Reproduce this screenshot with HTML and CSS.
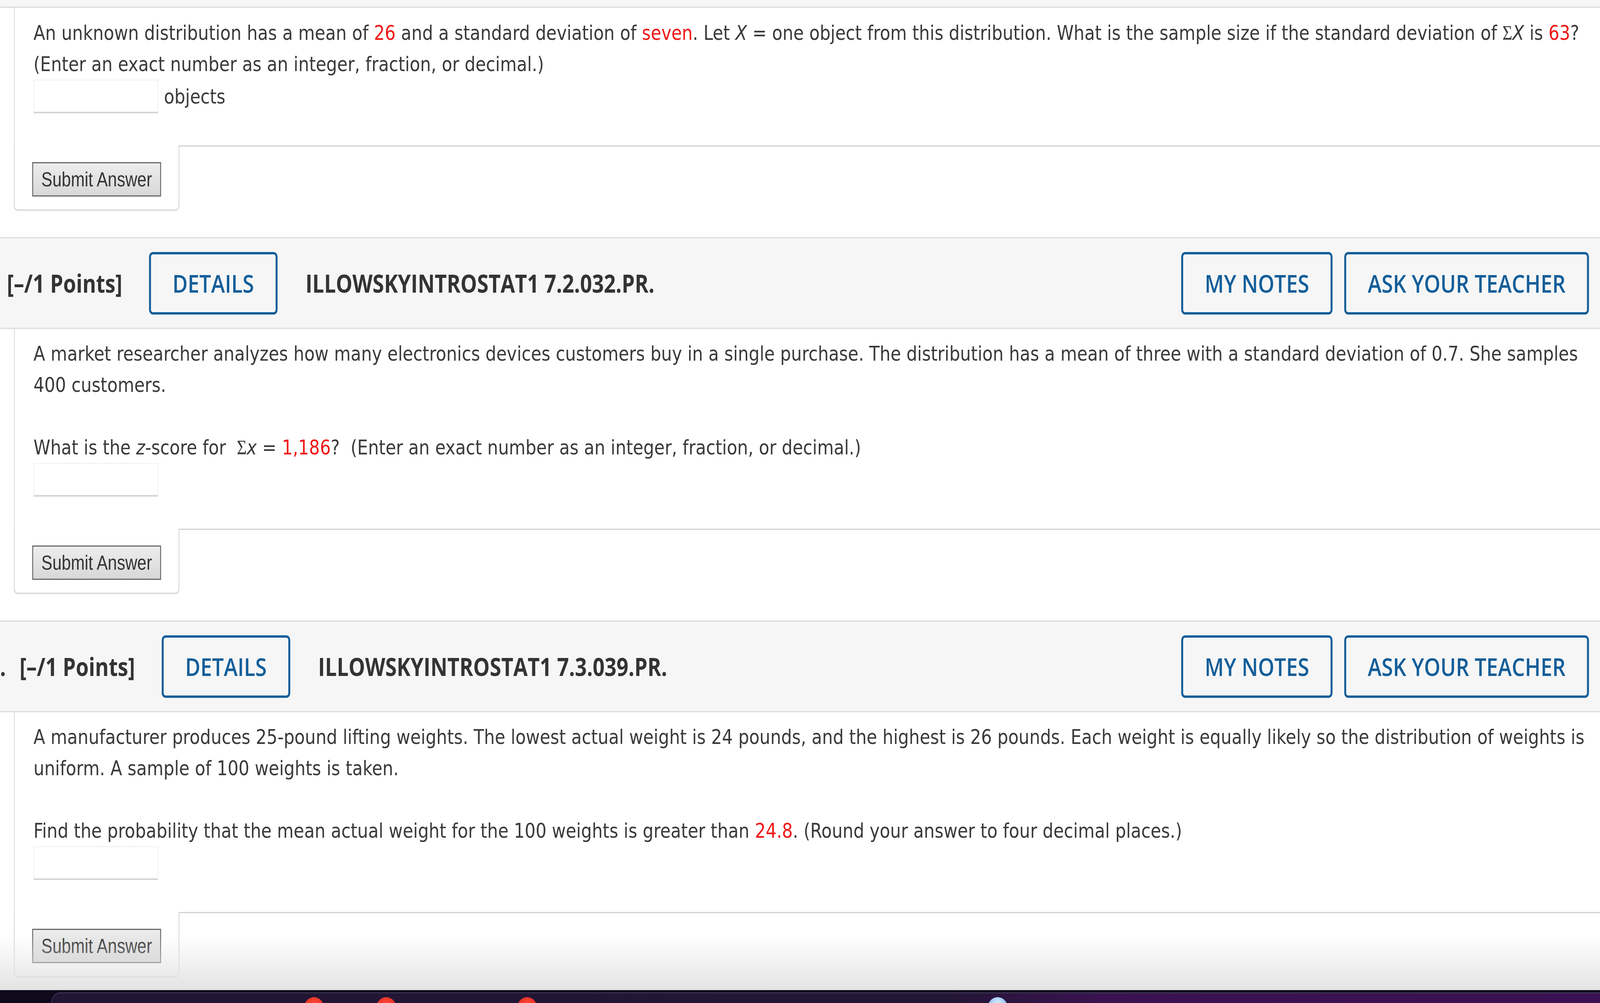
FILE: index.html
```html
<!DOCTYPE html>
<html lang="en">
<head>
<meta charset="utf-8">
<title>Assignment</title>
<link rel="stylesheet" href="styles.css">
</head>
<body>
<div class="screen">
  <main class="page">
    <div class="prev-head"></div>

    <section class="question">
      <div class="qbody first">
        <p>An unknown distribution has a mean of <span class="val">26</span> and a standard deviation of <span class="val">seven</span>. Let <i>X</i> = one object from this distribution. What is the sample size if the standard deviation of <span class="sig">Σ</span><i>X</i> is <span class="val">63</span>? (Enter an exact number as an integer, fraction, or decimal.)</p>
        <div class="answer"><input class="field" type="text" aria-label="answer"><span class="unit">objects</span></div>
      </div>
      <div class="qfoot"><div class="tab"><button class="submit">Submit Answer</button></div><div class="rest"></div></div>
    </section>

    <section class="question">
      <header class="qhead">
        <span class="points">[–/1 Points]</span>
        <button class="pill">DETAILS</button>
        <span class="qtitle">ILLOWSKYINTROSTAT1 7.2.032.PR.</span>
        <div class="actions"><button class="pill">MY NOTES</button><button class="pill">ASK YOUR TEACHER</button></div>
      </header>
      <div class="qbody">
        <p>A market researcher analyzes how many electronics devices customers buy in a single purchase. The distribution has a mean of three with a standard deviation of 0.7. She samples 400 customers.</p>
        <p>What is the <i>z</i>-score for &nbsp;<span class="sig">Σ</span><i>x</i> = <span class="val">1,186</span>? &nbsp;(Enter an exact number as an integer, fraction, or decimal.)</p>
        <div class="answer"><input class="field" type="text" aria-label="answer"></div>
      </div>
      <div class="qfoot"><div class="tab"><button class="submit">Submit Answer</button></div><div class="rest"></div></div>
    </section>

    <section class="question">
      <header class="qhead">
        <span class="qnum">.</span>
        <span class="points">[–/1 Points]</span>
        <button class="pill">DETAILS</button>
        <span class="qtitle">ILLOWSKYINTROSTAT1 7.3.039.PR.</span>
        <div class="actions"><button class="pill">MY NOTES</button><button class="pill">ASK YOUR TEACHER</button></div>
      </header>
      <div class="qbody">
        <p>A manufacturer produces 25-pound lifting weights. The lowest actual weight is 24 pounds, and the highest is 26 pounds. Each weight is equally likely so the distribution of weights is uniform. A sample of 100 weights is taken.</p>
        <p>Find the probability that the mean actual weight for the 100 weights is greater than <span class="val">24.8</span>. (Round your answer to four decimal places.)</p>
        <div class="answer"><input class="field" type="text" aria-label="answer"></div>
      </div>
      <div class="qfoot"><div class="tab"><button class="submit">Submit Answer</button></div><div class="rest"></div></div>
    </section>
  </main>

  <div class="fade"></div>
  <footer class="dock">
    <div class="dock-shelf">
      <span class="dock-icon red i1"></span>
      <span class="dock-icon red i2"></span>
      <span class="dock-icon red i3"></span>
      <span class="dock-icon blue i4"></span>
    </div>
  </footer>
</div>
</body>
</html>
```
FILE: styles.css
```css
html, body {
  margin: 0;
  padding: 0;
  background: #ffffff;
  overflow: hidden;
}

body {
  font-family: "DejaVu Sans", Verdana, sans-serif;
  color: #3a3a3a;
}

/* the whole screen, laid out for a 4917px wide window */
.screen {
  position: relative;
  width: 4917px;
  height: 2567px;
  display: flex;
  flex-direction: column;
  overflow: hidden;
}

/* narrower real viewport (browser caps width): fit the 4917px design horizontally */
@media (max-width: 4916px) {
  .screen {
    transform: scaleX(0.83303);
    transform-origin: 0 0;
  }
}

.page {
  flex: 1;
  overflow: hidden;
}

.prev-head {
  height: 17px;
  background: #f6f6f6;
  border-bottom: 3px solid #dcdcdc;
}

.question {
  margin-bottom: 69px;
}

/* header bar */
.qhead {
  box-sizing: border-box;
  height: 235px;
  display: flex;
  align-items: center;
  background: #f6f6f6;
  border-top: 3px solid #dcdcdc;
  border-bottom: 3px solid #dcdcdc;
  padding: 0 34px 0 21px;
  font-family: "Open Sans", "DejaVu Sans", sans-serif;
  color: #333333;
  white-space: nowrap;
}

.qnum {
  margin-left: -21px;
  margin-right: 42px;
  font-size: 63px;
  font-weight: 700;
}

.points {
  font-size: 64px;
  font-weight: 700;
  margin-right: 82px;
}

.qtitle {
  font-size: 64px;
  font-weight: 700;
  margin-left: 86px;
}

.actions {
  margin-left: auto;
  display: flex;
  gap: 36px;
}

.pill {
  box-sizing: border-box;
  height: 160px;
  padding: 0 66px;
  border: 6px solid #145e99;
  border-radius: 12px;
  background: transparent;
  color: #145e99;
  font-family: "Open Sans", "DejaVu Sans", sans-serif;
  font-size: 64px;
  font-weight: 600;
  line-height: 1;
  cursor: pointer;
}

/* question body */
.qbody {
  margin-left: 43px;
  border-left: 2px solid #d4d4d4;
  padding: 23px 30px 82px 58px;
  font-size: 52.4px;
  line-height: 80px;
}

.qbody.first {
  padding-top: 24px;
}

.qbody p {
  margin: 0 0 80px;
}

.qbody p:last-of-type {
  margin-bottom: 0;
}

.val {
  color: #f01616;
}

.sig {
  font-family: "Liberation Serif", "DejaVu Serif", serif;
}

.answer {
  display: flex;
  align-items: center;
  gap: 18px;
}

.field {
  box-sizing: border-box;
  width: 383px;
  height: 86px;
  margin: 0;
  border: 2px solid #f0f0f0;
  border-bottom: 4px solid #d4d4d4;
  background: #ffffff;
  font-size: 50px;
}

.unit {
  line-height: 86px;
}

/* submit tab */
.qfoot {
  display: flex;
  margin-left: 43px;
}

.tab {
  border: 2px solid #d0d0d0;
  border-top: none;
  border-radius: 0 0 12px 12px;
  padding: 43px 54px 33px;
  box-shadow: 0 3px 3px rgba(0, 0, 0, 0.07);
  background: #ffffff;
}

.rest {
  flex: 1;
  border-top: 3px solid #d2d2d2;
}

.submit {
  box-sizing: border-box;
  height: 88px;
  padding: 0 25px;
  border: 3px solid #6a6a6a;
  border-radius: 0;
  background: linear-gradient(#ededed, #d8d8d8);
  color: #333333;
  font-family: "Liberation Sans", Arial, sans-serif;
  font-size: 51px;
  line-height: 1;
}

/* bottom of screen */
.fade {
  position: absolute;
  left: 0;
  right: 0;
  bottom: 33px;
  height: 140px;
  background: linear-gradient(rgba(228, 228, 228, 0), rgba(226, 226, 226, 0.95));
  pointer-events: none;
}

.dock {
  flex: none;
  height: 33px;
  background: #0e0a1c;
  overflow: hidden;
}

.dock-shelf {
  position: relative;
  margin: 6px 0 0 157px;
  height: 60px;
  border-top: 2px solid #453d5c;
  border-left: 2px solid #3a3350;
  border-radius: 28px 0 0 0;
  background: linear-gradient(90deg, #221634 0%, #241636 58%, #3a1250 68%, #3d1254 100%);
}

.dock-icon {
  position: absolute;
  top: 10px;
  width: 66px;
  height: 66px;
  border-radius: 50%;
}

.dock-icon.red {
  background: radial-gradient(circle at 50% 30%, #ff4a3a, #d9251b 70%);
}

.dock-icon.blue {
  background: radial-gradient(circle at 50% 30%, #e8f4ff, #6aaaf0 70%);
}

.i1 { left: 773px; }
.i2 { left: 995px; }
.i3 { left: 1428px; }
.i4 { left: 2874px; }
```
